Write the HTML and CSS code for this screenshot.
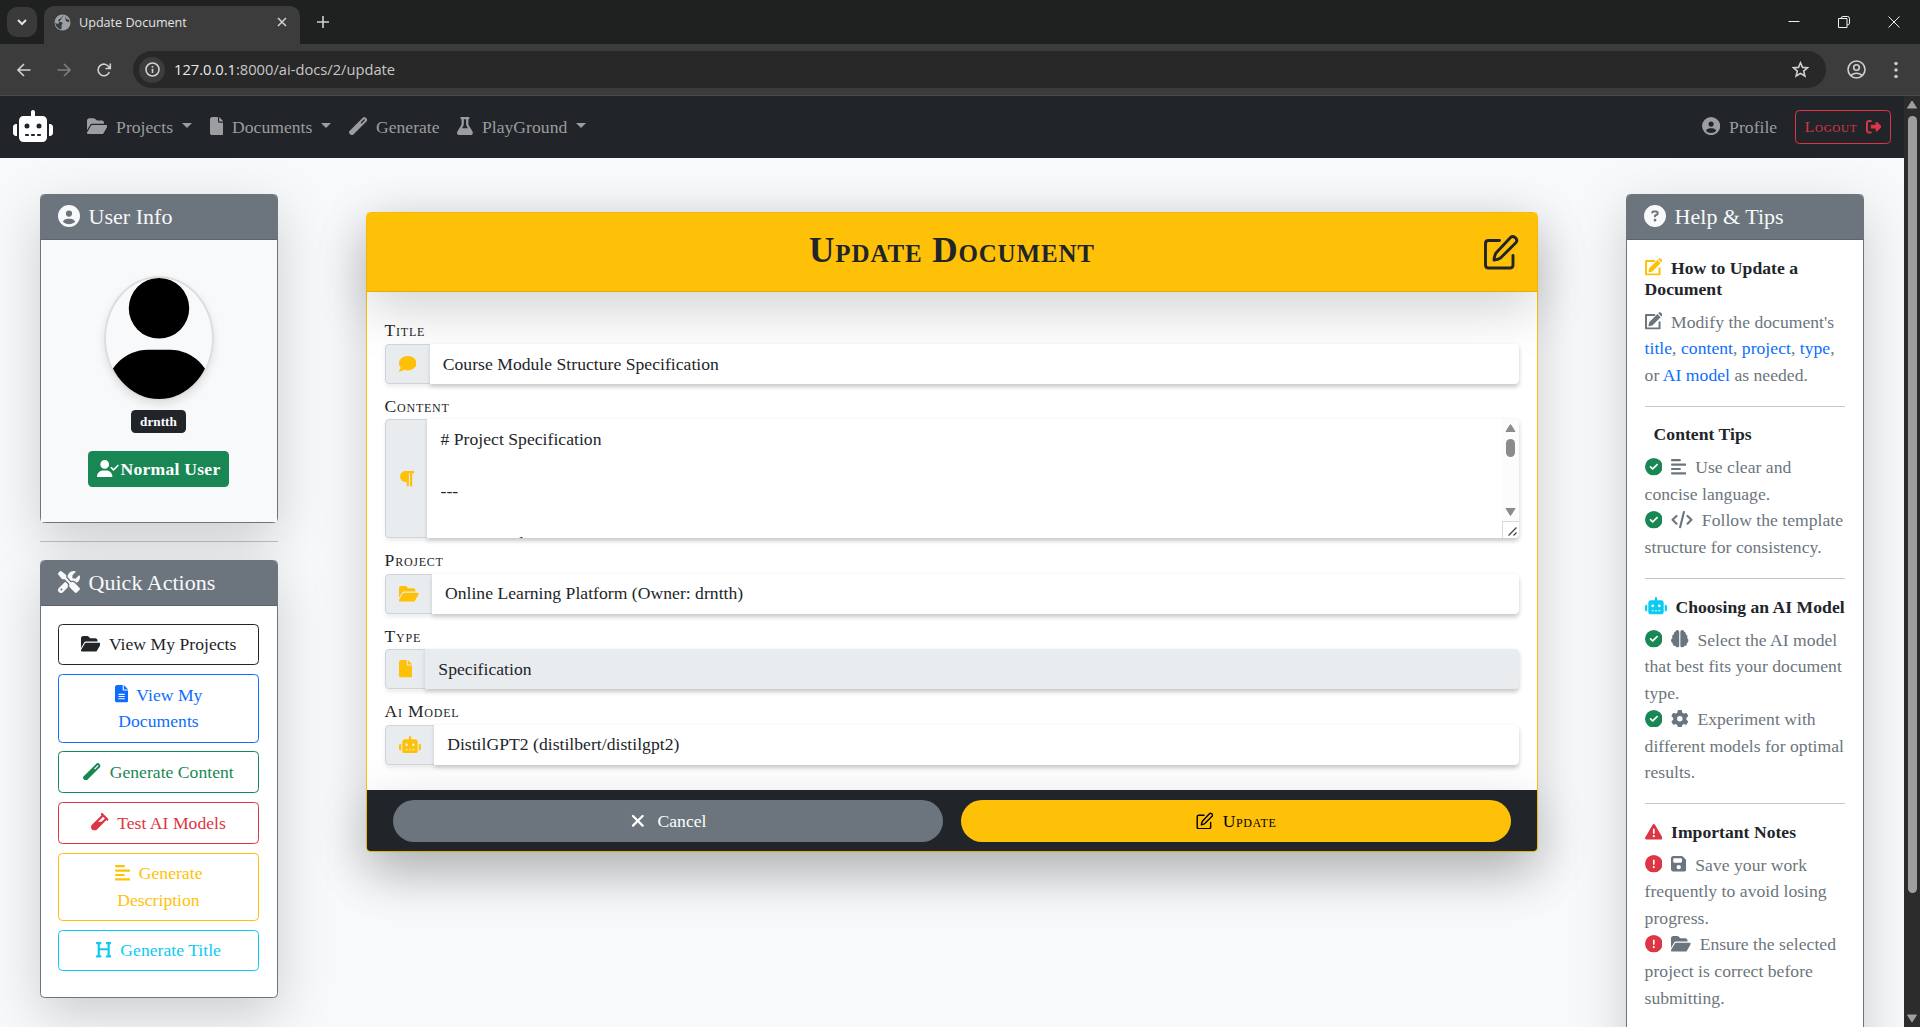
FILE: index.html
```html
<!DOCTYPE html>
<html lang="en">
<head>
<meta charset="utf-8">
<title>Update Document</title>
<link rel="stylesheet" href="styles.css">
</head>
<body>
<svg class="sprite" aria-hidden="true">
  <symbol id="robot" viewBox="0 0 640 512"><path d="M320 0c17.7 0 32 14.3 32 32V96H472c39.8 0 72 32.2 72 72V440c0 39.8-32.2 72-72 72H168c-39.8 0-72-32.2-72-72V168c0-39.8 32.2-72 72-72H288V32c0-17.7 14.3-32 32-32zM208 384c-8.800 0-16 7.200-16 16s7.200 16 16 16h32c8.800 0 16-7.200 16-16s-7.200-16-16-16H208zm96 0c-8.800 0-16 7.200-16 16s7.200 16 16 16h32c8.800 0 16-7.200 16-16s-7.200-16-16-16H304zm96 0c-8.800 0-16 7.200-16 16s7.200 16 16 16h32c8.800 0 16-7.200 16-16s-7.200-16-16-16H400zM264 256a40 40 0 1 0 -80 0 40 40 0 1 0 80 0zm152 40a40 40 0 1 0 0-80 40 40 0 1 0 0 80zM48 224H64V416H48c-26.500 0-48-21.500-48-48V272c0-26.500 21.500-48 48-48zm544 0c26.500 0 48 21.500 48 48v96c0 26.500-21.500 48-48 48H576V224h16z"/></symbol>
  <symbol id="folder-open" viewBox="0 0 576 512"><path d="M88.7 223.8L0 375.8V96C0 60.7 28.7 32 64 32H181.5c17 0 33.3 6.7 45.3 18.7l26.5 26.5c12 12 28.3 18.7 45.3 18.7H416c35.3 0 64 28.7 64 64v32H144c-22.800 0-43.800 12.100-55.300 31.800zm27.600 16.100C122.100 230 132.600 224 144 224H544c11.500 0 22 6.100 27.700 16.100s5.700 22.200-.1 32.100l-112 192C453.900 474 443.400 480 432 480H32c-11.500 0-22-6.100-27.700-16.100s-5.700-22.200 .1-32.100l112-192z"/></symbol>
  <symbol id="file" viewBox="0 0 384 512"><path d="M0 64C0 28.700 28.700 0 64 0H224V128c0 17.700 14.300 32 32 32H384V448c0 35.300-28.700 64-64 64H64c-35.300 0-64-28.700-64-64V64zm384 64H256V0L384 128z"/></symbol>
  <symbol id="file-lines" viewBox="0 0 384 512"><path d="M64 0C28.700 0 0 28.700 0 64V448c0 35.300 28.700 64 64 64H320c35.300 0 64-28.700 64-64V160H256c-17.700 0-32-14.300-32-32V0H64zM256 0V128H384L256 0zM112 256H272c8.800 0 16 7.200 16 16s-7.200 16-16 16H112c-8.800 0-16-7.200-16-16s7.200-16 16-16zm0 64H272c8.800 0 16 7.200 16 16s-7.200 16-16 16H112c-8.800 0-16-7.200-16-16s7.200-16 16-16zm0 64H272c8.800 0 16 7.200 16 16s-7.200 16-16 16H112c-8.800 0-16-7.200-16-16s7.200-16 16-16z"/></symbol>
  <symbol id="wand" viewBox="0 0 512 512"><path d="M14.100 463.300c-18.700-18.700-18.700-49.100 0-67.900L395.400 14.100c18.700-18.700 49.100-18.700 67.900 0l34.600 34.600c18.700 18.700 18.700 49.100 0 67.900L116.500 497.900c-18.700 18.700-49.100 18.700-67.900 0L14.100 463.300zM347.600 187.600l105-105L429.400 59.300l-105 105 23.300 23.300z"/></symbol>
  <symbol id="flask" viewBox="0 0 448 512"><path d="M288 0H160 128C110.300 0 96 14.300 96 32s14.300 32 32 32V196.800c0 11.800-3.300 23.500-9.500 33.500L10.300 406.200C3.600 417.200 0 429.700 0 442.600C0 480.900 31.100 512 69.400 512H378.600c38.300 0 69.400-31.100 69.400-69.400c0-12.800-3.600-25.400-10.300-36.400L329.500 230.400c-6.200-10.100-9.500-21.700-9.500-33.500V64c17.700 0 32-14.300 32-32s-14.300-32-32-32H288zM192 196.800V64h64V196.800c0 23.700 6.600 46.900 19 67.100L309.500 320h-171L173 263.900c12.400-20.200 19-43.400 19-67.100z"/></symbol>
  <symbol id="circle-user" viewBox="0 0 512 512"><path d="M399 384.200C376.900 345.800 335.400 320 288 320H224c-47.400 0-88.900 25.800-111 64.200c35.200 39.200 86.200 63.800 143 63.800s107.800-24.700 143-63.800zM0 256a256 256 0 1 1 512 0A256 256 0 1 1 0 256zm256 16a72 72 0 1 0 0-144 72 72 0 1 0 0 144z"/></symbol>
  <symbol id="logout" viewBox="0 0 512 512"><path d="M377.900 105.900L500.700 228.700c7.200 7.200 11.300 17.100 11.300 27.300s-4.100 20.100-11.300 27.300L377.900 406.100c-6.400 6.400-15 9.900-24 9.900c-18.700 0-33.900-15.200-33.900-33.900l0-62.100-128 0c-17.700 0-32-14.300-32-32l0-64c0-17.700 14.300-32 32-32l128 0 0-62.100c0-18.700 15.200-33.900 33.900-33.900c9 0 17.600 3.600 24 9.900zM160 96L96 96c-17.700 0-32 14.300-32 32l0 256c0 17.700 14.300 32 32 32l64 0c17.700 0 32 14.300 32 32s-14.300 32-32 32l-64 0c-53 0-96-43-96-96L0 128C0 75 43 32 96 32l64 0c17.700 0 32 14.300 32 32s-14.300 32-32 32z"/></symbol>
  <symbol id="user" viewBox="0 0 448 512"><path d="M224 256A128 128 0 1 0 224 0a128 128 0 1 0 0 256zm-45.700 48C79.800 304 0 383.800 0 482.300C0 498.700 13.300 512 29.700 512H418.300c16.400 0 29.700-13.300 29.700-29.700C448 383.800 368.200 304 269.700 304H178.300z"/></symbol>
  <symbol id="user-check" viewBox="0 0 640 512"><path d="M96 128a128 128 0 1 1 256 0A128 128 0 1 1 96 128zM0 482.300C0 383.800 79.800 304 178.300 304h91.400C368.200 304 448 383.800 448 482.300c0 16.400-13.300 29.700-29.700 29.700H29.700C13.300 512 0 498.700 0 482.300zM625 177L497 305c-9.400 9.400-24.600 9.400-33.900 0l-64-64c-9.400-9.400-9.400-24.600 0-33.900s24.600-9.400 33.900 0l47 47L591 143c9.400-9.400 24.600-9.400 33.900 0s9.400 24.600 0 33.900z"/></symbol>
  <symbol id="tools" viewBox="0 0 512 512"><path d="M78.600 5C69.100-2.400 55.600-1.500 47 7L7 47c-8.500 8.500-9.400 22-2.100 31.600l80 104c4.500 5.900 11.600 9.400 19 9.400h54.100l109 109c-14.700 29-10 65.400 14.300 89.600l112 112c12.500 12.500 32.800 12.500 45.300 0l64-64c12.500-12.500 12.500-32.800 0-45.300l-112-112c-24.200-24.200-60.600-29-89.600-14.300l-109-109V104c0-7.500-3.500-14.500-9.400-19L78.600 5zM19.900 396.100C7.200 408.800 0 426.100 0 444.100C0 481.600 30.400 512 67.900 512c18 0 35.300-7.200 48-19.900L233.700 374.300c-7.800-20.900-9-43.600-3.600-65.100l-61.700-61.700L19.900 396.100zM512 144c0-10.500-1.100-20.700-3.200-30.500c-2.400-11.200-16.100-14.100-24.200-6l-63.900 63.900c-3 3-7.100 4.700-11.300 4.700H352c-8.800 0-16-7.200-16-16V102.600c0-4.200 1.700-8.300 4.700-11.300l63.900-63.900c8.100-8.100 5.200-21.800-6-24.200C388.700 1.100 378.500 0 368 0C288.500 0 224 64.500 224 144l0 .8 85.300 85.300c36-9.100 75.800 .5 104 28.700L429 274.500c49-23 83-72.800 83-130.500zM56 432a24 24 0 1 1 48 0 24 24 0 1 1 -48 0z"/></symbol>
  <symbol id="vial" viewBox="0 0 512 512"><path d="M342.600 9.400c-12.500-12.500-32.800-12.500-45.300 0s-12.500 32.800 0 45.300l9.400 9.400L28.100 342.600C10.100 360.600 0 385 0 410.500V416c0 53 43 96 96 96h5.500c25.500 0 49.900-10.100 67.900-28.100L448 205.300l9.400 9.400c12.500 12.500 32.800 12.500 45.300 0s12.500-32.800 0-45.300l-32-32-96-96-32-32zM205.300 256L352 109.300 402.700 160l-96 96H205.300z"/></symbol>
  <symbol id="align-left" viewBox="0 0 448 512"><path d="M288 64c0 17.700-14.300 32-32 32H32C14.300 96 0 81.700 0 64S14.300 32 32 32H256c17.700 0 32 14.300 32 32zm0 256c0 17.700-14.300 32-32 32H32c-17.700 0-32-14.300-32-32s14.300-32 32-32H256c17.700 0 32 14.300 32 32zM0 192c0-17.700 14.300-32 32-32H416c17.700 0 32 14.300 32 32s-14.300 32-32 32H32c-17.700 0-32-14.300-32-32zM448 448c0 17.700-14.300 32-32 32H32c-17.700 0-32-14.300-32-32s14.300-32 32-32H416c17.700 0 32 14.300 32 32z"/></symbol>
  <symbol id="heading" viewBox="0 0 448 512"><path d="M0 64C0 46.300 14.300 32 32 32H80h48c17.700 0 32 14.300 32 32s-14.300 32-32 32H112V208H336V96H320c-17.700 0-32-14.300-32-32s14.300-32 32-32h48 48c17.700 0 32 14.300 32 32s-14.300 32-32 32H400V240 416h16c17.700 0 32 14.300 32 32s-14.300 32-32 32H368 320c-17.700 0-32-14.300-32-32s14.300-32 32-32h16V272H112V416h16c17.700 0 32 14.300 32 32s-14.300 32-32 32H80 32c-17.700 0-32-14.300-32-32s14.300-32 32-32H48V240 96H32C14.300 96 0 81.700 0 64z"/></symbol>
  <symbol id="comment" viewBox="0 0 512 512"><path d="M512 240c0 114.900-114.600 208-256 208c-37.100 0-72.300-6.400-104.100-17.900c-11.900 8.700-31.300 20.600-54.300 30.600C73.600 471.100 44.700 480 16 480c-6.500 0-12.300-3.900-14.800-9.900c-2.500-6-1.100-12.800 3.400-17.400l.3-.3c.3-.3 .7-.7 1.300-1.400c1.100-1.200 2.800-3.100 4.900-5.700c4.100-5 9.600-12.400 15.200-21.600c10-16.600 19.500-38.400 21.400-62.900C17.700 326.800 0 285.100 0 240C0 125.100 114.600 32 256 32s256 93.100 256 208z"/></symbol>
  <symbol id="paragraph" viewBox="0 0 448 512"><path d="M192 32h64H416c17.700 0 32 14.300 32 32s-14.300 32-32 32H384l0 352c0 17.700-14.300 32-32 32s-32-14.300-32-32l0-352H288V448c0 17.700-14.300 32-32 32s-32-14.300-32-32V352H192c-88.400 0-160-71.600-160-160S103.600 32 192 32z"/></symbol>
  <symbol id="circle-question" viewBox="0 0 512 512"><path d="M256 512A256 256 0 1 0 256 0a256 256 0 1 0 0 512zM169.800 165.300c7.900-22.300 29.100-37.300 52.800-37.300h58.300c34.900 0 63.100 28.300 63.100 63.100c0 22.600-12.100 43.500-31.700 54.800L280 264.400c-.2 13-10.900 23.600-24 23.600c-13.300 0-24-10.700-24-24V250.500c0-8.600 4.600-16.500 12.100-20.800l44.300-25.400c4.700-2.700 7.600-7.700 7.600-13.100c0-8.400-6.800-15.100-15.100-15.100H222.600c-3.400 0-6.400 2.100-7.500 5.300l-.4 1.200c-4.400 12.500-18.200 19-30.600 14.600s-19-18.200-14.600-30.600l.4-1.200zM224 352a32 32 0 1 1 64 0 32 32 0 1 1 -64 0z"/></symbol>
  <symbol id="circle-check" viewBox="0 0 512 512"><path d="M256 512A256 256 0 1 0 256 0a256 256 0 1 0 0 512zM369 209L241 337c-9.400 9.400-24.600 9.400-33.900 0l-64-64c-9.400-9.400-9.400-24.600 0-33.900s24.600-9.400 33.900 0l47 47L335 175c9.400-9.400 24.600-9.400 33.900 0s9.400 24.600 0 33.900z"/></symbol>
  <symbol id="circle-bang" viewBox="0 0 512 512"><path d="M256 512A256 256 0 1 0 256 0a256 256 0 1 0 0 512zm0-384c13.300 0 24 10.700 24 24V264c0 13.300-10.700 24-24 24s-24-10.700-24-24V152c0-13.300 10.700-24 24-24zM224 352a32 32 0 1 1 64 0 32 32 0 1 1 -64 0z"/></symbol>
  <symbol id="warning" viewBox="0 0 512 512"><path d="M256 32c14.200 0 27.300 7.500 34.500 19.800l216 368c7.300 12.400 7.300 27.700 .2 40.100S486.300 480 472 480H40c-14.300 0-27.600-7.700-34.700-20.100s-7-27.800 .2-40.100l216-368C228.700 39.500 241.800 32 256 32zm0 128c-13.300 0-24 10.700-24 24V296c0 13.300 10.700 24 24 24s24-10.700 24-24V184c0-13.300-10.700-24-24-24zm32 224a32 32 0 1 0 -64 0 32 32 0 1 0 64 0z"/></symbol>
  <symbol id="floppy" viewBox="0 0 448 512"><path d="M64 32C28.700 32 0 60.700 0 96V416c0 35.300 28.700 64 64 64H384c35.300 0 64-28.700 64-64V173.300c0-17-6.700-33.300-18.700-45.300L352 50.700C340 38.700 323.700 32 306.700 32H64zm0 96c0-17.700 14.300-32 32-32H288c17.700 0 32 14.300 32 32v64c0 17.700-14.300 32-32 32H96c-17.700 0-32-14.300-32-32V128zM224 288a64 64 0 1 1 0 128 64 64 0 1 1 0-128z"/></symbol>
  <symbol id="brain" viewBox="0 0 512 512"><path d="M184 0c30.900 0 56 25.100 56 56V456c0 30.900-25.100 56-56 56c-28.900 0-52.700-21.900-55.700-50.100c-5.200 1.400-10.700 2.100-16.300 2.100c-35.300 0-64-28.700-64-64c0-7.400 1.300-14.600 3.600-21.200C21.400 367.400 0 338.200 0 304c0-31.900 18.700-59.500 45.800-72.300C37.100 220.800 32 207 32 192c0-30.700 21.600-56.300 50.400-62.600C80.800 123.900 80 118 80 112c0-29.900 20.600-55.100 48.300-62.100C131.300 21.900 155.100 0 184 0zM328 0c28.900 0 52.600 21.900 55.700 49.900c27.800 7 48.300 32.100 48.300 62.100c0 6-.8 11.900-2.400 17.400c28.800 6.200 50.400 31.900 50.400 62.600c0 15-5.100 28.800-13.800 39.700C493.300 244.500 512 272.100 512 304c0 34.200-21.400 63.400-51.600 74.800c2.300 6.600 3.600 13.800 3.600 21.200c0 35.300-28.700 64-64 64c-5.600 0-11.100-.7-16.300-2.100c-3 28.200-26.800 50.100-55.700 50.100c-30.900 0-56-25.100-56-56V56c0-30.900 25.100-56 56-56z"/></symbol>
  <symbol id="gear" viewBox="0 0 512 512"><path d="M495.900 166.600c3.200 8.700 .5 18.400-6.400 24.600l-43.300 39.400c1.100 8.300 1.700 16.800 1.700 25.400s-.6 17.100-1.700 25.400l43.300 39.400c6.900 6.200 9.600 15.900 6.400 24.600c-4.400 11.900-9.700 23.300-15.800 34.300l-4.700 8.100c-6.600 11-14 21.400-22.100 31.200c-5.900 7.200-15.700 9.600-24.500 6.800l-55.700-17.700c-13.400 10.300-28.200 18.900-44 25.400l-12.500 57.100c-2 9.100-9 16.300-18.200 17.800c-13.800 2.300-28 3.500-42.500 3.500s-28.700-1.200-42.500-3.500c-9.200-1.500-16.200-8.700-18.200-17.800l-12.500-57.100c-15.800-6.500-30.600-15.100-44-25.400L83.100 425.900c-8.800 2.800-18.600 .3-24.500-6.800c-8.100-9.800-15.500-20.200-22.100-31.200l-4.700-8.100c-6.100-11-11.400-22.400-15.800-34.300c-3.200-8.700-.5-18.400 6.400-24.600l43.300-39.400C64.600 273.100 64 264.600 64 256s.6-17.100 1.700-25.400L22.400 191.200c-6.900-6.200-9.600-15.900-6.400-24.600c4.400-11.900 9.700-23.300 15.800-34.300l4.700-8.100c6.600-11 14-21.400 22.100-31.200c5.900-7.200 15.700-9.600 24.500-6.800l55.700 17.700c13.400-10.300 28.200-18.900 44-25.400l12.500-57.100c2-9.100 9-16.300 18.200-17.800C227.300 1.200 241.500 0 256 0s28.700 1.200 42.500 3.500c9.200 1.500 16.200 8.700 18.200 17.800l12.500 57.100c15.800 6.500 30.600 15.100 44 25.400l55.700-17.700c8.800-2.800 18.600-.3 24.500 6.800c8.100 9.800 15.500 20.200 22.100 31.200l4.700 8.100c6.100 11 11.400 22.400 15.800 34.300zM256 336a80 80 0 1 0 0-160 80 80 0 1 0 0 160z"/></symbol>
  <symbol id="code" viewBox="0 0 640 512"><path d="M376 32L264 480M160 144L45 256l115 112M480 144l115 112-115 112" fill="none" stroke="currentColor" stroke-width="62" stroke-linecap="round" stroke-linejoin="round"/></symbol>
  <symbol id="edit-solid" viewBox="0 0 512 512"><path d="M272 88H30v394h394V300" fill="none" stroke="currentColor" stroke-width="58" stroke-linecap="round" stroke-linejoin="round"/><path d="M361 57l94 94-240 240-92 22q-22 3-20-20l18-96zM384 34l24-22q24-22 48 0l44 44q22 24 0 48l-22 24z"/></symbol>
  <symbol id="edit-line" viewBox="0 0 36 36"><g fill="none" stroke="currentColor" stroke-width="2.900" stroke-linecap="round" stroke-linejoin="round"><path d="M16.500 6.500H5.500q-3 0-3 3V31q0 3 3 3H27q3 0 3-3V21.500"/><path d="M27.500 3.500q2-2 4.500 0l.8.8q2 2.200 0 4.500L17.500 24Q15 25.600 11 26q.3-4 2-7z"/></g></symbol>
  <symbol id="xmark" viewBox="0 0 384 512"><path d="M52 116l280 280M332 116L52 396" fill="none" stroke="currentColor" stroke-width="66" stroke-linecap="round"/></symbol>
</svg>

<header class="browser">
  <div class="tabstrip">
    <button class="tabsearch"><svg width="10" height="7" viewBox="0 0 10 7"><path d="M1 1l4 4 4-4" class="ln2"/></svg></button>
    <div class="tab">
      <svg width="17" height="17" viewBox="0 0 17 17"><circle cx="8.500" cy="8.500" r="8" fill="#9aa0a6"/><path d="M9.500 1.500c-2 1-1.500 2.300-3 3S3.700 6 4.500 7.200s3.700.2 4 1.800-1.300 1.300-1 2.800.5 2.500-.7 3.700C3.500 14.500 1 11.500 1.500 8c.3 1.500 1.500 1.500 2.500 2M11 2c1 1.500.5 2.500 2 3s2.500 1 2.500 3.300c-1-.6-2.500-.2-3.600-1.300" fill="#3c3c3c"/></svg>
      <span class="tab-title">Update Document</span>
      <svg width="10" height="10" viewBox="0 0 10 10"><path d="M1 1l8 8M9 1L1 9" class="ln"/></svg>
    </div>
    <svg class="newtab" width="12" height="12" viewBox="0 0 12 12"><path d="M6 0v12M0 6h12" class="ln"/></svg>
    <div class="winbtns">
      <svg width="12" height="12" viewBox="0 0 12 12"><path d="M.5 5.500h11" class="wl"/></svg>
      <svg width="12" height="12" viewBox="0 0 12 12"><path d="M.5 2.500h8.500v9H.5zM3 2.500Q3 .5 5 .5h4.500q2 0 2 2V7q0 2-2.500 2" class="wl"/></svg>
      <svg width="12" height="12" viewBox="0 0 12 12"><path d="M.5.5l11 11M11.500.5l-11 11" class="wl"/></svg>
    </div>
  </div>
  <div class="toolbar">
    <svg width="14" height="14" viewBox="0 0 14 14"><path d="M13.500 7H1M7 1L1 7l6 6" class="ln"/></svg>
    <svg class="dim" width="14" height="14" viewBox="0 0 14 14"><path d="M.5 7H13M7 1l6 6-6 6" class="ln"/></svg>
    <svg width="15" height="14" viewBox="0 0 15 14"><path d="M12.300 9A5.800 5.800 0 1 1 12 4.200L13 5.300M13.300.5v5H8.500" class="ln"/></svg>
    <div class="omnibox">
      <span class="info"><svg width="15" height="15" viewBox="0 0 15 15"><circle cx="7.500" cy="7.500" r="6.500" class="ln"/><path d="M7.500 6.800V11M7.500 4v1.500" class="ln"/></svg></span>
      <span class="url"><b>127.0.0.1</b>:8000/ai-docs/2/update</span>
      <svg width="17" height="17" viewBox="0 0 17 17"><path d="M8.500 1.800l2 4.600 5 .4-3.800 3.300 1.200 4.900-4.400-2.600L4.100 15l1.200-4.900L1.500 6.800l5-.4z" class="ln"/></svg>
    </div>
    <svg class="avatar-btn" width="19" height="19" viewBox="0 0 19 19"><g class="ln"><circle cx="9.500" cy="9.500" r="8.500"/><circle cx="9.500" cy="7.500" r="2.800"/><path d="M3.800 15.500q5.700-4.500 11.400 0"/></g></svg>
    <svg class="menu" width="4" height="18" viewBox="0 0 4 18" fill="#c7c7c7"><circle cx="2" cy="2.500" r="1.800"/><circle cx="2" cy="9" r="1.800"/><circle cx="2" cy="15.500" r="1.800"/></svg>
  </div>
</header>

<div class="viewport">
  <div class="page">
    <nav class="navbar">
      <svg class="icon w640 brand"><use href="#robot"/></svg>
      <a class="nav-link"><svg class="icon w576"><use href="#folder-open"/></svg> Projects <i class="caret"></i></a>
      <a class="nav-link"><svg class="icon w384"><use href="#file"/></svg> Documents <i class="caret"></i></a>
      <a class="nav-link"><svg class="icon"><use href="#wand"/></svg> Generate</a>
      <a class="nav-link"><svg class="icon w448"><use href="#flask"/></svg> PlayGround <i class="caret"></i></a>
      <a class="nav-link profile"><svg class="icon"><use href="#circle-user"/></svg> Profile</a>
      <button class="logout">Logout <svg class="icon"><use href="#logout"/></svg></button>
    </nav>

    <main class="columns">
      <aside class="side">
        <section class="card">
          <h5 class="card-head"><svg class="icon"><use href="#circle-user"/></svg> User Info</h5>
          <div class="card-body user-body">
            <div class="avatar"><svg><use href="#user"/></svg></div>
            <span class="badge name">drntth</span>
            <span class="badge role"><svg class="icon w640"><use href="#user-check"/></svg>Normal User</span>
          </div>
        </section>
        <hr>
        <section class="card">
          <h5 class="card-head"><svg class="icon"><use href="#tools"/></svg> Quick Actions</h5>
          <div class="card-body actions">
            <a class="btn dark"><svg class="icon w576"><use href="#folder-open"/></svg> View My Projects</a>
            <a class="btn blue"><svg class="icon w384"><use href="#file-lines"/></svg> View My<br>Documents</a>
            <a class="btn green"><svg class="icon"><use href="#wand"/></svg> Generate Content</a>
            <a class="btn red"><svg class="icon"><use href="#vial"/></svg> Test AI Models</a>
            <a class="btn yellow"><svg class="icon w448"><use href="#align-left"/></svg> Generate<br>Description</a>
            <a class="btn cyan"><svg class="icon w448"><use href="#heading"/></svg> Generate Title</a>
          </div>
        </section>
      </aside>

      <form class="doc">
        <div class="doc-head"><h2>Update Document</h2><svg class="doc-edit"><use href="#edit-line"/></svg></div>
        <div class="doc-body">
          <label>Title</label>
          <div class="group"><span class="addon"><svg class="icon"><use href="#comment"/></svg></span><div class="input">Course Module Structure Specification</div></div>
          <label>Content</label>
          <div class="group tall"><span class="addon"><svg class="icon w448"><use href="#paragraph"/></svg></span>
            <div class="input area"><div class="area-text"># Project Specification

---

## 1. Introduction</div>
              <div class="area-bar">
                <svg width="11" height="8" viewBox="0 0 11 8"><path d="M5.500.5L10 7.500H1z" stroke="#8b8b8b" stroke-linejoin="round"/></svg>
                <i></i>
                <svg class="down" width="11" height="8" viewBox="0 0 11 8"><path d="M5.500 7.500L10 .5H1z" stroke="#8b8b8b" stroke-linejoin="round"/></svg>
                <span class="grip"><svg width="9" height="9" viewBox="0 0 9 9"><path d="M.5 8.500l8-8M5.500 8.500l3-3" stroke="#444" stroke-width="1.300"/></svg></span>
              </div>
            </div>
          </div>
          <label>Project</label>
          <div class="group"><span class="addon"><svg class="icon w576"><use href="#folder-open"/></svg></span><div class="input">Online Learning Platform (Owner: drntth)</div></div>
          <label>Type</label>
          <div class="group"><span class="addon"><svg class="icon w384"><use href="#file"/></svg></span><div class="input disabled">Specification</div></div>
          <label>Ai Model</label>
          <div class="group"><span class="addon"><svg class="icon w640"><use href="#robot"/></svg></span><div class="input">DistilGPT2 (distilbert/distilgpt2)</div></div>
        </div>
        <div class="doc-foot">
          <a class="pill cancel"><svg class="icon"><use href="#xmark"/></svg> Cancel</a>
          <a class="pill update"><svg class="icon"><use href="#edit-line"/></svg> Update</a>
        </div>
      </form>

      <aside class="side">
        <section class="card">
          <h5 class="card-head"><svg class="icon"><use href="#circle-question"/></svg> Help &amp; Tips</h5>
          <div class="card-body help">
            <h6><svg class="icon c-yellow"><use href="#edit-solid"/></svg> How to Update a Document</h6>
            <p><svg class="icon"><use href="#edit-solid"/></svg> Modify the document's <a>title</a>, <a>content</a>, <a>project</a>, <a>type</a>, or <a>AI model</a> as needed.</p>
            <hr>
            <h6 class="indent">Content Tips</h6>
            <p><svg class="icon c-green"><use href="#circle-check"/></svg> <svg class="icon w448"><use href="#align-left"/></svg> Use clear and concise language.<br>
            <svg class="icon c-green"><use href="#circle-check"/></svg> <svg class="icon w640"><use href="#code"/></svg> Follow the template structure for consistency.</p>
            <hr>
            <h6><svg class="icon w640 c-cyan"><use href="#robot"/></svg> Choosing an AI Model</h6>
            <p><svg class="icon c-green"><use href="#circle-check"/></svg> <svg class="icon"><use href="#brain"/></svg> Select the AI model that best fits your document type.<br>
            <svg class="icon c-green"><use href="#circle-check"/></svg> <svg class="icon"><use href="#gear"/></svg> Experiment with different models for optimal results.</p>
            <hr>
            <h6><svg class="icon c-red"><use href="#warning"/></svg> Important Notes</h6>
            <p><svg class="icon c-red"><use href="#circle-bang"/></svg> <svg class="icon w448"><use href="#floppy"/></svg> Save your work frequently to avoid losing progress.<br>
            <svg class="icon c-red"><use href="#circle-bang"/></svg> <svg class="icon w576"><use href="#folder-open"/></svg> Ensure the selected project is correct before submitting.</p>
          </div>
        </section>
      </aside>
    </main>
  </div>
  <div class="scrollbar">
    <svg width="12" height="9" viewBox="0 0 12 9"><path d="M6 1l4.500 7h-9z" stroke="#9f9f9f" stroke-linejoin="round"/></svg>
    <i></i>
    <svg class="down" width="12" height="9" viewBox="0 0 12 9"><path d="M6 8l4.500-7h-9z" stroke="#9f9f9f" stroke-linejoin="round"/></svg>
  </div>
</div>
</body>
</html>
```

FILE: styles.css
```css
* { box-sizing: border-box; }

body {
  margin: 0;
  height: 1027px;
  overflow: hidden;
  display: flex;
  flex-direction: column;
  font: 17.6px/26.4px "Liberation Serif", "Times New Roman", serif;
  letter-spacing: .03px;
  color: #212529;
  background: #f8f9fa;
}

h2, h5, h6, p { margin: 0; }
hr { height: 1px; margin: 17.6px 0; border: 0; background: rgba(33, 37, 41, .25); }
button { font-family: inherit; background: none; margin: 0; }
.sprite { display: none; }

.icon {
  width: 1em;
  height: 1em;
  fill: currentColor;
  vertical-align: -.125em;
  margin-right: .25em;
  flex: none;
}
.w640 { width: 1.25em; }
.w576 { width: 1.125em; }
.w448 { width: .875em; }
.w384 { width: .75em; }

/* browser window */
.browser { flex: none; height: 96px; background: #3c3c3c; border-bottom: 1px solid #4b4b4b; font-family: "Open Sans", "Noto Sans", sans-serif; letter-spacing: 0; }
.ln { fill: none; stroke: #d0d0d0; stroke-width: 1.6; }
.ln2 { fill: none; stroke: #e3e3e3; stroke-width: 2; }
.wl { fill: none; stroke: #f0f0f0; stroke-width: 1; }
.dim { opacity: .45; }
.tabstrip { height: 44px; padding: 6px 20px 0 7px; display: flex; background: #1f2120; }
.tabsearch { width: 30px; height: 30px; padding: 0; border: 0; border-radius: 10px; background: #3a3a3a; display: flex; align-items: center; justify-content: center; margin: 1px 7px 0 0; }
.tab { width: 256px; height: 38px; padding: 0 13px 6px 10px; display: flex; align-items: center; background: #3c3c3c; border-radius: 10px 10px 0 0; }
.tab-title { flex: 1; margin-left: 8px; padding-top: 2px; color: #e3e3e3; font-size: 12.6px; }
.newtab { margin: 10px 0 0 17px; }
.winbtns { margin: 10px 0 0 auto; display: flex; gap: 38px; }
.toolbar { height: 51px; padding: 0 22px 0 17px; display: flex; align-items: center; gap: 26px; }
.avatar-btn { margin-right: 2px; }
.omnibox { flex: 1; height: 37px; margin: 0 -5px 0 -5px; padding: 0 17px 0 6px; border-radius: 19px; background: #282828; display: flex; align-items: center; }
.info { width: 26px; height: 26px; border-radius: 50%; background: #3c3c3c; display: flex; align-items: center; justify-content: center; }
.url { flex: 1; margin-left: 9px; color: #c7c7c7; font-size: 14.7px; }
.url b { font-weight: 400; color: #e8e8e8; }

/* page area and its scrollbar */
.viewport { flex: 1; min-height: 0; display: flex; }
.page { flex: 1; overflow: hidden; }
.scrollbar { width: 16px; padding: 4px 0; background: #2c2c2c; display: flex; flex-direction: column; align-items: center; fill: #9f9f9f; }
.scrollbar i { width: 9px; height: 777px; margin-top: 7px; border-radius: 5px; background: #9f9f9f; }
.down { margin-top: auto; }

/* navigation */
.navbar { height: 62px; padding: 0 13px; display: flex; align-items: center; background: #212529; color: #9b9d9e; }
.brand { font-size: 32px; color: #fff; margin-right: 25px; position: relative; top: -1px; }
.nav-link { padding: 0 8.8px; white-space: nowrap; }
.nav-link .icon { font-size: 18.2px; margin-right: 4.4px; }
.caret { display: inline-block; vertical-align: .255em; border: .3em solid transparent; border-top-color: currentColor; border-bottom: 0; }
.nav-link .caret { margin-left: .255em; }
.profile { margin-left: auto; }
.logout { height: 34px; margin-left: 9px; padding: 0 8.8px; border: 1px solid #dc3545; border-radius: 4.400px; color: #dc3545; font-size: 15.4px; line-height: 23.1px; font-variant: small-caps; letter-spacing: .75px; }
.logout .icon { margin: 0 0 0 4px; }

/* three column layout */
.columns { padding: 36px 40px 0; display: flex; align-items: flex-start; justify-content: space-between; }
.side { width: 238px; }
.side > hr { margin: 18px 0; }
.card { border: 1px solid #6c757d; border-radius: 4.400px; background: #fff; box-shadow: 0 17.6px 52.8px rgba(0, 0, 0, .175); }
.card-head { padding: 8.800px 17px; background: #6c757d; border-bottom: 1px solid #5d656c; border-radius: 3.400px 3.400px 0 0; color: #f8f9fa; font-size: 22px; font-weight: 400; line-height: 26.4px; }
.card-head .icon { margin-right: 3px; }
.card-body { padding: 17.600px; }

/* user card */
.user-body { height: 282px; padding: 36px 18px 0 17px; display: flex; flex-direction: column; align-items: center; background: #f8f9fa; }
.avatar { width: 110px; height: 125px; border: 2px solid #ddd; border-radius: 50%; overflow: hidden; box-shadow: 0 4px 8px rgba(0, 0, 0, .1); }
.avatar svg { display: block; width: 106px; height: 121px; }
.badge { font-weight: 700; color: #fff; }
.name { height: 23px; line-height: 23px; padding: 0 8.6px; margin-top: 9px; background: #212529; border-radius: 4.400px; font-size: 13.2px; }
.role { height: 36px; line-height: 36px; padding: 0 8.8px; margin-top: 18px; background: #198754; border-radius: 4.400px; letter-spacing: .25px; }
.role .icon { margin-right: 2px; }

/* quick actions */
.actions { height: 391.400px; padding: 17.600px 18px 0 17px; display: flex; flex-direction: column; gap: 8.8px; }
.btn { padding: 6.6px 13.2px; border: 1px solid currentColor; border-radius: 4.400px; text-align: center; line-height: 26.6px; }
.dark { color: #212529; }
.blue, .help a { color: #0d6efd; }
.green, .c-green { color: #198754; }
.red, .c-red { color: #dc3545; }
.yellow, .c-yellow { color: #ffc107; }
.cyan, .c-cyan { color: #0dcaf0; }

/* help */
.help { height: 850px; }
.help h6 { margin-bottom: 8.8px; font-size: 17.6px; line-height: 21.12px; }
.help h6.indent { padding-left: 9px; }
.help p { color: #6c757d; line-height: 26.53px; }

/* document form */
.doc { width: 1172px; margin-top: 18px; border: 1px solid #ffc107; border-radius: 4.400px; background: #fff; box-shadow: 0 17.6px 52.8px rgba(0, 0, 0, .175); }
.doc-head { height: 79px; padding: 0 17.6px; display: flex; align-items: center; background: #ffc107; border-bottom: 1px solid #e3ac0a; border-radius: 3.400px 3.400px 0 0; box-shadow: 0 17.6px 52.8px rgba(0, 0, 0, .175); }
.doc-head h2 { flex: 1; padding: 0 0 2px 36px; text-align: center; font-size: 35.2px; line-height: 42px; font-variant: small-caps; letter-spacing: .85px; }
.doc-edit { width: 36px; height: 36px; }
.doc-body { height: 498px; padding: 25.400px 17.6px 0; }
label { display: block; line-height: 26.6px; font-variant: small-caps; letter-spacing: .75px; }
.group { height: 40px; margin-bottom: 8.8px; display: flex; border-radius: 4.400px; box-shadow: 0 2.200px 4.400px rgba(0, 0, 0, .075); }
.addon { padding: 0 13.2px; display: flex; align-items: center; border: 1px solid #ced4da; border-right: 0; border-radius: 4.400px 0 0 4.400px; background: #e9ecef; color: #ffc107; }
.addon .icon { margin: 0; }
.input { flex: 1; padding: 6.6px 13.2px; background: #fff; border-radius: 0 4.400px 4.400px 0; box-shadow: 0 2.200px 4.400px rgba(0, 0, 0, .15); }
.disabled { background: #e9ecef; }
.tall { height: 119px; }
.area { padding: 0 0 0 13.2px; display: flex; overflow: hidden; }
.area-text { flex: 1; padding-top: 6.400px; line-height: 26.1px; white-space: pre-wrap; }
.area-bar { width: 17px; height: 119px; padding-top: 5px; display: flex; flex-direction: column; align-items: center; background: #fcfcfc; fill: #8b8b8b; }
.area-bar i { width: 9px; height: 18px; margin-top: 7px; border-radius: 5px; background: #8b8b8b; }
.grip { width: 17px; height: 17px; margin-top: 5px; padding: 0 2px 2px 0; display: flex; align-items: flex-end; justify-content: flex-end; border: 1px solid #dadada; border-width: 1px 0 0 1px; background: #fff; }
.doc-foot { height: 61px; padding: 1px 26px 0; display: grid; grid-template-columns: 1fr 1fr; gap: 18px; align-items: center; background: #212529; border-radius: 0 0 3.400px 3.400px; box-shadow: 0 17.6px 52.8px rgba(0, 0, 0, .175); }
.pill { height: 42px; line-height: 42px; border-radius: 21px; text-align: center; }
.cancel { background: #6c757d; color: #fff; }
.cancel .icon { margin-right: 6px; }
.update { background: #ffc107; color: #000; font-variant: small-caps; letter-spacing: .6px; }
```
